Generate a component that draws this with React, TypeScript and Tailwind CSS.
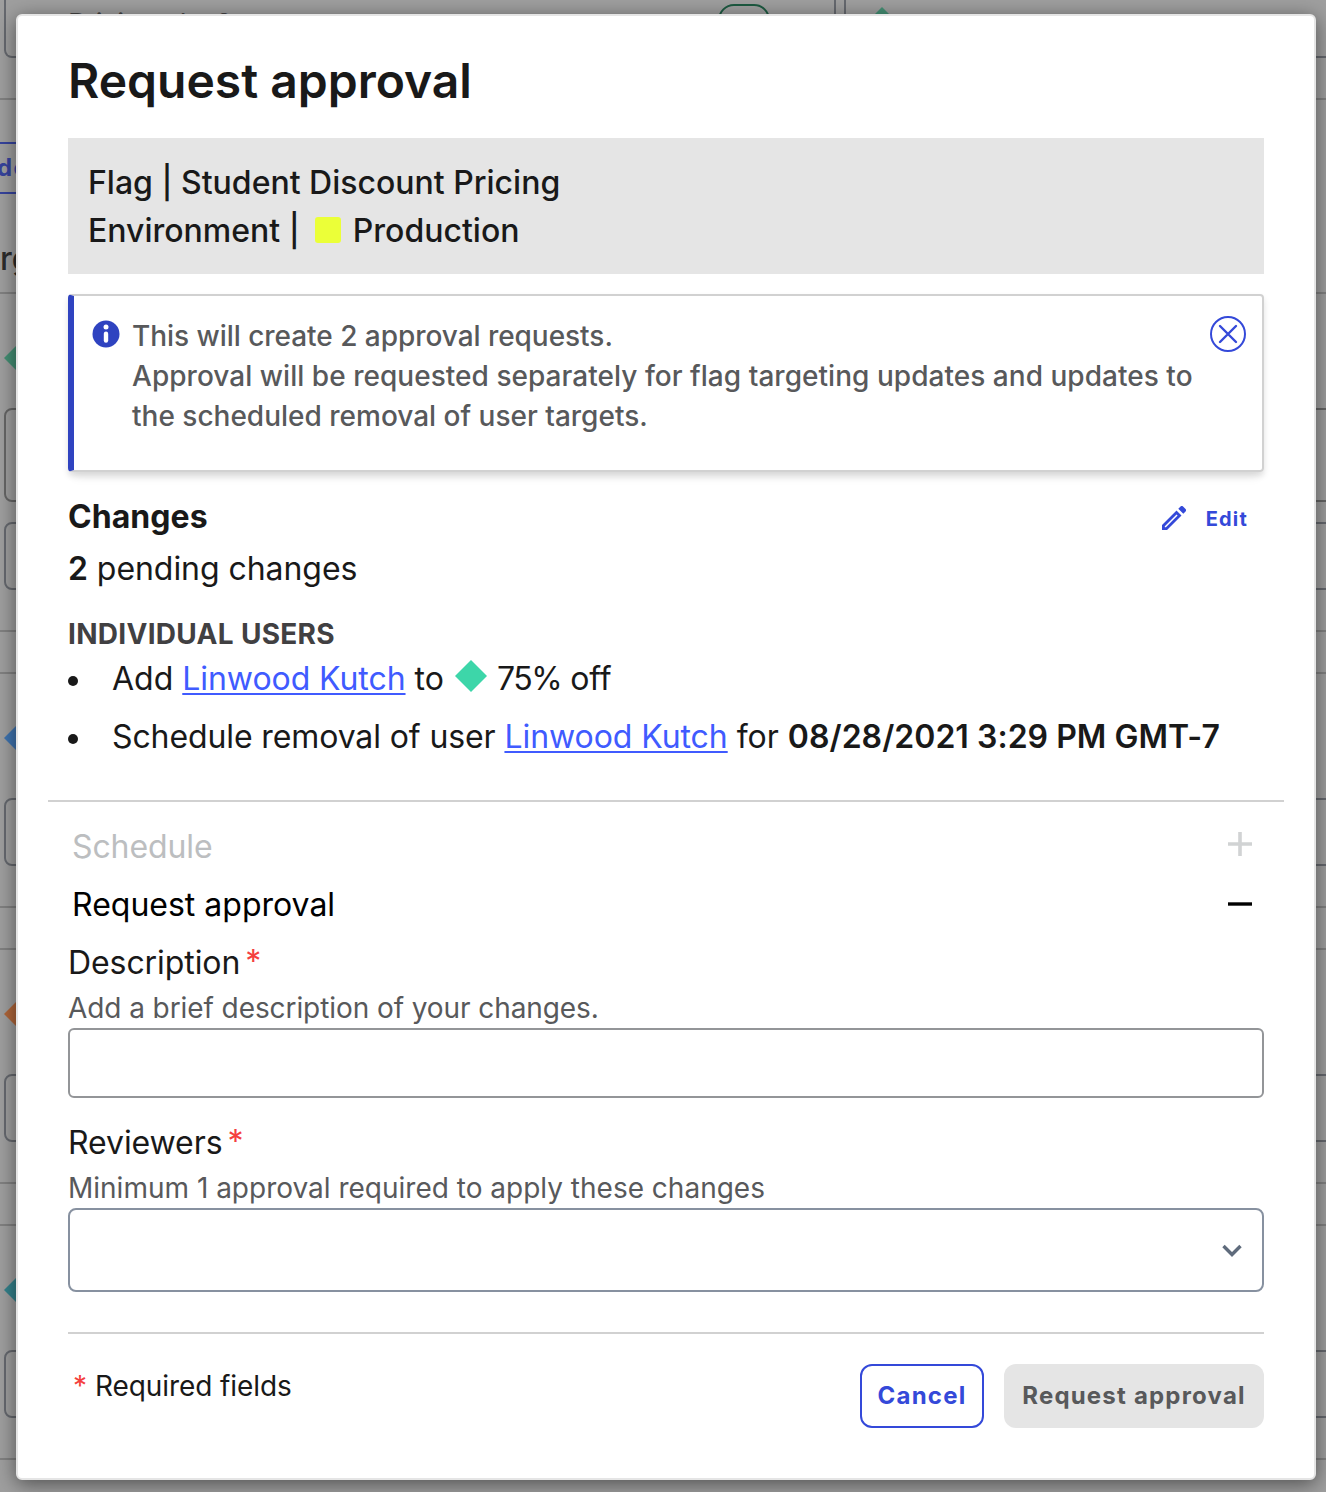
import React from "react";

const box = "rounded-[8px] border-2 border-[#66696f]";

function Rule() {
  return <div className="h-0.5 w-full shrink-0 bg-[#818181]" />;
}

function Diamond({ color, className }: { color: string; className: string }) {
  return (
    <svg viewBox="0 0 32 32" className={className} fill={color}>
      <path d="M16 0 32 16 16 32 0 16Z" />
    </svg>
  );
}

function VariationRow({ color }: { color: string }) {
  return (
    <div className="flex h-[234px] shrink-0 flex-col pl-1 pt-12">
      <Diamond color={color} className="size-9 shrink-0" />
      <div className={`mt-[42px] h-[68px] w-[1340px] shrink-0 ${box}`} />
    </div>
  );
}

function Backdrop() {
  return (
    <div aria-hidden="true" className="flex h-full w-full flex-col overflow-hidden bg-[#9f9f9f]">
      <div className="flex h-[58px] shrink-0 gap-2 pl-1">
        <div className="flex h-[58px] w-[832px] shrink-0 rounded-b-[8px] border-2 border-t-0 border-[#66696f] pl-[62px]">
          <span className="w-[650px] pt-2 text-[28px] leading-8 text-[#444] tracking-[-0.6px]">Pricing plan?</span>
          <span className="mt-1 h-8 w-[52px] rounded-full border-2 border-[#1d5a41]" />
        </div>
        <div className="h-[58px] w-[600px] shrink-0 rounded-b-[8px] border-2 border-t-0 border-[#66696f] pl-[20px] pt-[7px]">
          <Diamond color="#448f74" className="size-8" />
        </div>
      </div>
      <div className="h-10 shrink-0" />
      <Rule />
      <div className="mt-[42px] flex h-[52px] w-[120px] shrink-0 items-center border-y-2 border-[#36439d] text-[24px] font-bold tracking-[1.4px] text-[#36439d]">
        <span className="-ml-[3px]">der</span>
      </div>
      <div className="h-[98px] shrink-0 pt-[45px] text-[32px] font-medium leading-10 text-[#2c2c2c]">rgeting</div>
      <Rule />
      <div className="flex h-[336px] shrink-0 flex-col pl-1 pt-[46px]">
        <Diamond color="#448f74" className="size-9 shrink-0" />
        <div className="mt-8 h-[94px] w-[1340px] shrink-0 rounded-[8px] border-2 border-[#666]" />
        <div className={`mt-5 h-[68px] w-[1340px] shrink-0 ${box}`} />
      </div>
      <Rule />
      <div className="h-10 shrink-0" />
      <Rule />
      <div className="-mt-0.5 shrink-0"><VariationRow color="#3f74b0" /></div>
      <Rule />
      <div className="h-10 shrink-0" />
      <Rule />
      <div className="-mt-0.5 shrink-0"><VariationRow color="#b0663a" /></div>
      <Rule />
      <div className="h-10 shrink-0" />
      <Rule />
      <div className="-mt-0.5 shrink-0"><VariationRow color="#34828c" /></div>
      <Rule />
    </div>
  );
}

function Link({ children }: { children: React.ReactNode }) {
  return (
    <a className="tracking-[-0.06px] text-[#405bff] underline decoration-2 underline-offset-[3px]">{children}</a>
  );
}

function Field({ label, hint, children }: { label: string; hint: React.ReactNode; children: React.ReactNode }) {
  return (
    <div className="flex flex-col">
      <label className="flex h-[48px] pt-px text-[32px] leading-[48px] tracking-[-0.08px]">
        {label}
        <span className="-mt-px ml-[5px] text-[#f43f3f]">*</span>
      </label>
      <span className="mt-[1px] h-[41px] whitespace-nowrap text-[28px] leading-[42px] text-[#58595b]">{hint}</span>
      {children}
    </div>
  );
}

export default function App() {
  return (
    <div className="relative h-[1492px] w-[1326px] overflow-hidden font-[Inter,sans-serif] text-[#191919] [font-optical-sizing:none]">
      <Backdrop />
      <div
        role="dialog"
        className="absolute left-4 top-[14px] flex h-[1466px] w-[1300px] flex-col rounded-[6px] border-2 border-[#e5e5e5] bg-white px-[50px] shadow-[0_4px_20px_rgba(0,0,0,0.5)]"
      >
        <h1 className="mt-[35px] h-[60px] whitespace-nowrap text-[48px] font-semibold leading-[60px]">Request approval</h1>

        <div className="mt-[27px] h-[136px] bg-[#e5e5e5] px-5 pt-[21px] text-[32px] font-medium leading-[48px]">
          <p className="whitespace-nowrap">Flag | Student Discount Pricing</p>
          <p className="flex items-center whitespace-nowrap">
            Environment |
            <span className="-mt-0.5 ml-[15px] mr-[12px] size-[26px] rounded-[3px] bg-[#ebff38]" />
            Production
          </p>
        </div>

        <div className="mt-5 flex h-[178px] shrink-0 rounded-[4px] border-2 border-l-[6px] border-[#d1d1d1] border-l-[#2f43c0] pt-5 shadow-[0_4px_6px_rgba(0,0,0,0.12),0_12px_10px_-6px_rgba(0,0,0,0.05)]">
          <svg viewBox="0 0 28 28" className="ml-[18px] mt-1 size-7 shrink-0">
            <circle cx="14" cy="14" r="13.5" fill="#2f43c0" />
            <circle cx="14" cy="7" r="2.5" fill="#fff" />
            <rect x="11.8" y="11.5" width="4.4" height="11.2" rx="2.2" fill="#fff" />
          </svg>
          <p className="ml-3 w-[1078px] whitespace-nowrap text-[28px] font-medium leading-10 text-[#58595b]">
            <span className="tracking-[-0.04px]">This will create 2 approval requests.</span>
            <br />
            <span className="tracking-[0.035px]">Approval will be requested separately for flag targeting updates and updates to</span>
            <br />
            the scheduled removal of user targets.
          </p>
          <svg viewBox="0 0 36 36" className="size-9 shrink-0" fill="none" stroke="#3449d9" strokeLinecap="round">
            <circle cx="18" cy="18" r="17" strokeWidth="2" />
            <path d="m10 10 16 16M26 10 10 26" strokeWidth="2.4" />
          </svg>
        </div>

        <div className="mt-[20px] flex h-[50px] items-center justify-between">
          <h2 className="text-[32px] font-bold tracking-[0.05px]">Changes</h2>
          <button className="mr-[16px] mt-[3px] flex items-center text-[20px] font-bold tracking-[1.2px] text-[#3449d9]">
            <svg viewBox="0 0 24 24" className="-mt-0.5 mr-5 size-6" fill="currentColor">
              <path fillRule="evenodd" d="M0 19 14.5 4.500l5 5L5 24H0ZM2.800 20.200v1h1.100L15.600 9.500l-1.100-1.100Z" />
              <path d="m16.300 2.700 2-2a2.100 2.100 0 0 1 3 0l2 2a2.100 2.100 0 0 1 0 3l-2 2Z" />
            </svg>
            Edit
          </button>
        </div>
        <p className="mt-[2px] h-[50px] whitespace-nowrap text-[32px] leading-[50px] tracking-[-0.05px]">
          <b className="font-semibold">2</b> pending changes
        </p>

        <h3 className="mt-5 h-10 text-[28px] font-bold leading-10 tracking-[0.3px] text-[#414042]">INDIVIDUAL USERS</h3>
        <ul className="flex h-[146px] flex-col gap-2.5 whitespace-nowrap pt-px text-[32px] leading-[48px]">
          <li className="flex items-center">
            <span className="mr-[34px] mt-[3px] size-2.5 rounded-full bg-[#191919]" />
            <span>Add <Link>Linwood Kutch</Link> to</span>
            <Diamond color="#3dd6a9" className="-mt-[7px] ml-[11px] mr-[10px] size-8" />
            <span><span className="tracking-[-1.4px]">75%</span> <span className="tracking-[-0.2px]">off</span></span>
          </li>
          <li className="flex items-center">
            <span className="mr-[34px] mt-[3px] size-2.5 rounded-full bg-[#191919]" />
            <span>
              <span className="tracking-[-0.11px]">Schedule removal of user </span><Link>Linwood Kutch</Link> for{" "}
              <b className="font-semibold tracking-[0.03px]">08/28/2021 3:29 PM GMT-7</b>
            </span>
          </li>
        </ul>

        <div className="-mx-5 h-0.5 shrink-0 bg-[#d1d1d1]" />

        <div className="mt-4 flex h-[58px] items-center justify-between pl-1 pr-3 text-[32px] tracking-[-0.1px] text-[#bcbec0]">
          Schedule
          <svg viewBox="0 0 24 24" className="-mt-1.5 size-6" stroke="#d1d3d4" strokeWidth="3.600"><path d="M12 0v24M0 12h24" /></svg>
        </div>
        <div className="flex h-[58px] items-center justify-between pl-1 pr-3 text-[32px] text-black">
          Request approval
          <svg viewBox="0 0 24 24" className="-mt-0.5 size-6" stroke="#000" strokeWidth="3.400"><path d="M0 12h24" /></svg>
        </div>

        <div className="mt-[4px]">
          <Field label="Description" hint={<span className="tracking-[-0.08px]">Add a brief description of your changes.</span>}>
            <div className="h-[70px] rounded-[6px] border-2 border-[#939598]" />
          </Field>
        </div>
        <div className="mt-5">
          <Field label="Reviewers" hint="Minimum 1 approval required to apply these changes">
            <div className="flex h-[84px] items-center justify-end rounded-[8px] border-2 border-[#8791a0] pr-5">
              <svg viewBox="0 0 20 14" className="mt-px h-3.5 w-5" fill="none" stroke="#5f6b7c" strokeWidth="3.400"><path d="m1.500 2 8.500 8.500L18.500 2" /></svg>
            </div>
          </Field>
        </div>

        <div className="mt-10 flex justify-between border-t-2 border-[#d1d1d1] pt-[30px]">
          <p className="ml-[5px] h-11 whitespace-nowrap text-[28px] leading-[44px] tracking-[-0.08px]">
            <span className="mr-2 text-[#f43f3f]">*</span>Required fields
          </p>
          <div className="flex gap-5 text-[24px] font-bold tracking-[1.2px]">
            <button className="h-16 w-[124px] rounded-[12px] border-2 border-[#3449d9] text-[#3449d9]">Cancel</button>
            <button className="h-16 w-[260px] whitespace-nowrap rounded-[12px] bg-[#e5e5e5] text-[#58595b]">Request approval</button>
          </div>
        </div>
      </div>
    </div>
  );
}
